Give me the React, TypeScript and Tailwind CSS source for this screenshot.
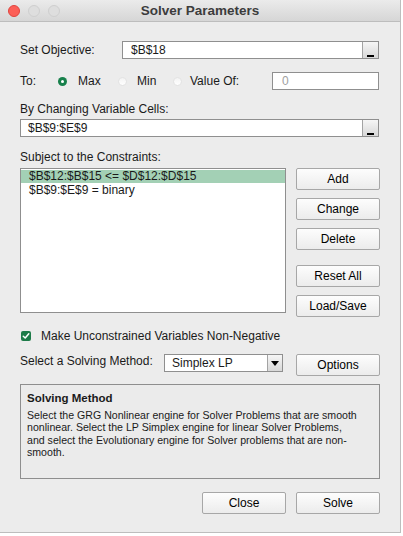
import React from 'react';

const Btn = ({ label, className = '' }: { label: string; className?: string }) => (
  <button
    className={`h-[22px] w-[84px] rounded-[2px] border border-[#a7a7a7] bg-linear-to-b from-[#fdfdfd] to-[#ececec] text-[12px] leading-[20px] text-black ${className}`}
  >
    {label}
  </button>
);

// small "collapse dialog" button at the end of the reference fields
const RefBtn = () => (
  <div className="flex h-full w-[16px] items-end justify-center border-l border-[#a3a3a3] bg-linear-to-b from-[#f6f6f6] to-[#d8d8d8] pb-[1px]">
    <div className="h-[2px] w-[7px] bg-black" />
  </div>
);

const Radio = ({ checked }: { checked?: boolean }) =>
  checked ? (
    <div className="flex h-[9px] w-[9px] shrink-0 items-center justify-center rounded-full bg-[#17804b]">
      <div className="h-[3px] w-[3px] rounded-full bg-white" />
    </div>
  ) : (
    <div className="h-[9px] w-[9px] shrink-0 rounded-full border border-[#e3e3e3] bg-linear-to-b from-[#f3f3f3] to-white" />
  );

const App: React.FC = () => {
  return (
    <div className="h-[536px] w-[403px] overflow-hidden bg-white font-['Liberation_Sans',Arial,sans-serif] text-[12px] text-[#1a1a1a]">
      <div className="flex h-[533px] w-[401px] flex-col border-r border-b border-[#bdbdbd] bg-[#ececec]">
        {/* Title bar */}
        <div className="grid h-[22px] shrink-0 grid-cols-[1fr_auto_1fr] items-center border-b border-[#bdbdbd] bg-linear-to-b from-[#ebebeb] to-[#d6d6d6]">
          <div className="flex items-center gap-[8px] pl-[8px]">
            <div className="h-[12px] w-[12px] rounded-full border border-[#e0443e] bg-[#fc5f57]" />
            <div className="h-[12px] w-[12px] rounded-full border border-[#cfcfcf] bg-[#dedede]" />
            <div className="h-[12px] w-[12px] rounded-full border border-[#cfcfcf] bg-[#dedede]" />
          </div>
          <div className="pt-[1px] text-[13.5px] font-bold text-[#3c3c3c]">Solver Parameters</div>
          <div />
        </div>

        <div className="flex flex-col px-[20px]">
          {/* Set Objective */}
          <div className="mt-[19px] flex h-[18px] items-center">
            <span className="w-[102px]">Set Objective:</span>
            <div className="mr-[1px] flex h-full flex-1 border border-[#8f8f8f] bg-white">
              <span className="flex-1 pl-[8px] leading-[16px]">$B$18</span>
              <RefBtn />
            </div>
          </div>

          {/* To */}
          <div className="mt-[13px] flex h-[18px] items-center">
            <span className="w-[38px]">To:</span>
            <Radio checked />
            <span className="ml-[11px] w-[40px]">Max</span>
            <Radio />
            <span className="ml-[10px] w-[36px]">Min</span>
            <Radio />
            <span className="ml-[8px] w-[82px]">Value Of:</span>
            <div className="h-full w-[107px] border border-[#8f8f8f] bg-white pl-[9px] leading-[16px] text-[#a0a0a0]">0</div>
          </div>

          {/* By Changing */}
          <div className="mt-[12px] leading-[14px]">By Changing Variable Cells:</div>
          <div className="mt-[3px] mr-[1px] flex h-[18px] border border-[#8f8f8f] bg-white">
            <span className="flex-1 pl-[7px] leading-[16px]">$B$9:$E$9</span>
            <RefBtn />
          </div>

          {/* Constraints */}
          <div className="mt-[13px] leading-[14px]">Subject to the Constraints:</div>
          <div className="mt-[4px] flex items-start">
            <div className="h-[145px] w-[266px] border border-[#8f8f8f] bg-white pt-[1px]">
              <div className="h-[13px] bg-[#a3d0b5] pl-[8px] leading-[13px] whitespace-nowrap">$B$12:$B$15 &lt;= $D$12:$D$15</div>
              <div className="h-[14px] pl-[8px] leading-[14px] whitespace-nowrap">$B$9:$E$9 = binary</div>
            </div>
            <div className="ml-[10px] flex flex-col">
              <Btn label="Add" />
              <Btn label="Change" className="mt-[8px]" />
              <Btn label="Delete" className="mt-[8px]" />
              <Btn label="Reset All" className="mt-[15px]" />
              <Btn label="Load/Save" className="mt-[8px]" />
            </div>
          </div>

          {/* Checkbox */}
          <div className="mt-[13px] flex h-[12px] items-center">
            <div className="ml-[1px] flex h-[10px] w-[10px] items-center justify-center rounded-[2px] bg-[#1e7b49]">
              <svg width="8" height="8" viewBox="0 0 8 8" fill="none">
                <path d="M1.3 4.2 L3.2 6 L6.8 1.8" stroke="white" strokeWidth="1.5" strokeLinecap="round" strokeLinejoin="round" />
              </svg>
            </div>
            <span className="ml-[10px]">Make Unconstrained Variables Non-Negative</span>
          </div>

          {/* Solving method */}
          <div className="mt-[12px] flex h-[21px] items-start">
            <span className="w-[144px] leading-[15px]">Select a Solving Method:</span>
            <div className="flex h-[18px] w-[119px] border border-[#8f8f8f] bg-white">
              <span className="flex-1 pl-[7px] leading-[16px]">Simplex LP</span>
              <div className="flex h-full w-[15px] items-center justify-center border-l border-[#a3a3a3] bg-linear-to-b from-[#f6f6f6] to-[#d8d8d8]">
                <svg width="8" height="5" viewBox="0 0 8 5">
                  <path d="M0 0 H8 L4 5 Z" fill="black" />
                </svg>
              </div>
            </div>
            <Btn label="Options" className="ml-[13px] h-[21px]" />
          </div>

          {/* Description box */}
          <div className="mt-[9px] h-[95px] border border-[#8e8e8e] bg-[#ebebeb] px-[6px] pt-[7px]">
            <div className="text-[11.5px] leading-[13px] font-bold">Solving Method</div>
            <div className="mt-[4px] text-[10.6px] leading-[12.4px] whitespace-nowrap">
              Select the GRG Nonlinear engine for Solver Problems that are smooth
              <br />
              nonlinear. Select the LP Simplex engine for linear Solver Problems,
              <br />
              and select the Evolutionary engine for Solver problems that are non-
              <br />
              smooth.
            </div>
          </div>

          {/* Footer buttons */}
          <div className="mt-[13px] flex justify-end gap-[10px]">
            <Btn label="Close" />
            <Btn label="Solve" />
          </div>
        </div>
      </div>
    </div>
  );
};

export default App;
